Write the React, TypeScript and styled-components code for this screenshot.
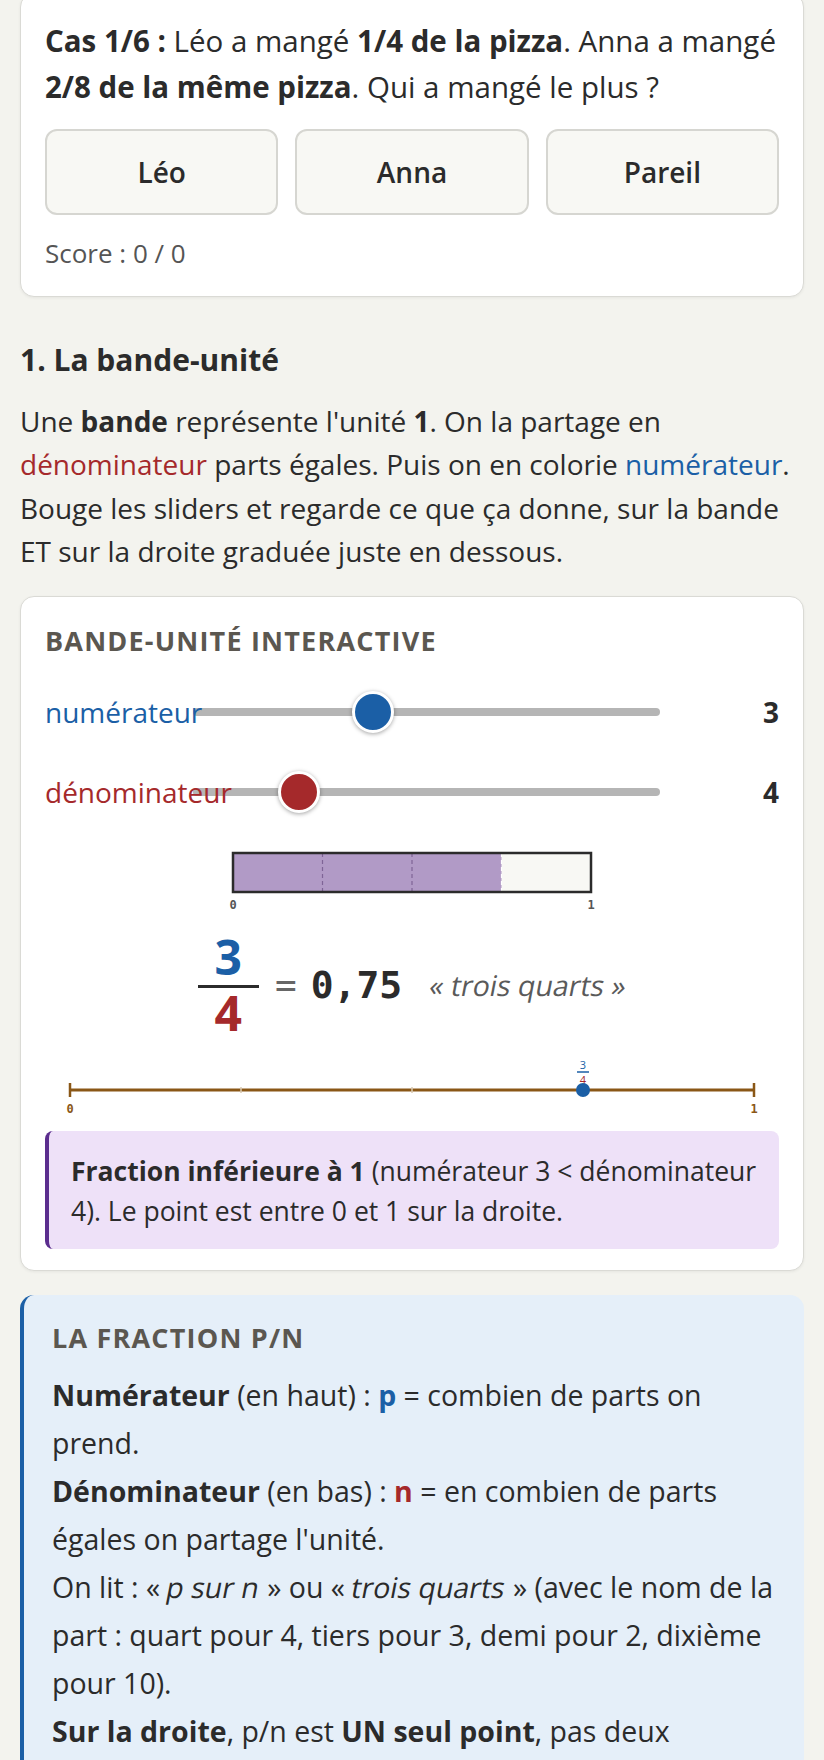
import { useState } from 'react'
import styled, { createGlobalStyle } from 'styled-components'

const BLUE = '#1b5fa6'
const RED = '#a5292b'
const INK = '#2b2b2b'
const BROWN = '#8a5716'
const MONO = "'DejaVu Sans Mono', 'Liberation Mono', monospace"

const GlobalStyle = createGlobalStyle`
  body {
    margin: 0;
    background: #f3f3ee;
    color: ${INK};
    font-family: 'Open Sans', 'Noto Sans', sans-serif;
  }
`

// the view is scrolled a little: the quiz card starts above the fold
const Page = styled.main`
  margin-top: -7px;
  padding: 0 20px 40px;
`

const Card = styled.section`
  background: #fff;
  border: 1px solid #dadad5;
  border-radius: 14px;
  padding: 24px 24px 21px;
  box-shadow: 0 1px 3px rgba(0, 0, 0, 0.06);
`

const Question = styled.p`
  margin: 0 0 19px;
  font-size: 29.5px;
  line-height: 46px;
`

const Choices = styled.div`
  display: grid;
  grid-template-columns: repeat(3, 1fr);
  gap: 17px;
`

const ChoiceButton = styled.button`
  height: 86px;
  border: 2px solid #d6d6d1;
  border-radius: 12px;
  background: #f8f8f4;
  color: ${INK};
  font-family: inherit;
  font-size: 28px;
  font-weight: 600;
  cursor: pointer;
`

const Score = styled.div`
  margin-top: 18px;
  font-size: 26px;
  line-height: 41.6px;
  color: #555;
`

const SectionTitle = styled.h2`
  margin: 43px 0 21px;
  font-size: 30px;
  line-height: 39px;
  font-weight: 700;
`

const Lead = styled.p`
  margin: 0 0 22px;
  font-size: 28px;
  line-height: 43.5px;
`

const Tint = styled.span<{ $color: string }>`
  color: ${(p) => p.$color};
`

// slanted upright face, keeps the roman widths
const Slant = styled.em`
  display: inline-block;
  font-style: normal;
  transform: skewX(-11deg);
`

const BoxTitle = styled.h3`
  margin: 0 0 28px;
  font-size: 27px;
  line-height: 39px;
  font-weight: 700;
  letter-spacing: 1.2px;
  text-transform: uppercase;
  color: #5b5750;
`

const Sliders = styled.div`
  display: grid;
  row-gap: 32px;
`

const SliderRow = styled.label`
  display: grid;
  grid-template-columns: 148px 1fr 119px;
  align-items: center;
  height: 48px;
`

const SliderName = styled.span<{ $color: string }>`
  position: relative;
  z-index: 1;
  white-space: nowrap;
  font-size: 28px;
  color: ${(p) => p.$color};
`

const Range = styled.input<{ $color: string }>`
  appearance: none;
  -webkit-appearance: none;
  width: 100%;
  height: 48px;
  margin: 0;
  background: transparent;

  &::-webkit-slider-runnable-track {
    height: 8px;
    border-radius: 4px;
    background: #b5b5b5;
  }

  &::-webkit-slider-thumb {
    -webkit-appearance: none;
    width: 42px;
    height: 42px;
    margin-top: -17px;
    border-radius: 50%;
    border: 3px solid #fff;
    background: ${(p) => p.$color};
    box-shadow: 0 1px 4px rgba(0, 0, 0, 0.35);
  }
`

const SliderValue = styled.span`
  text-align: right;
  font-size: 28px;
  font-weight: 700;
`

const BandSvg = styled.svg`
  display: block;
  margin: 33px auto 0;
`

const FractionRow = styled.div`
  display: flex;
  justify-content: center;
  align-items: center;
  margin-top: 20px;
`

const Fraction = styled.div`
  display: flex;
  flex-direction: column;
  align-items: stretch;
  padding: 0 17px;
  font-size: 48px;
  font-weight: 700;
  line-height: 48px;
  text-align: center;
`

const FractionBar = styled.div`
  height: 3.5px;
  margin: 4px -17px 1px;
  background: ${INK};
`

const Equals = styled.span`
  margin-left: 16px;
  font-family: ${MONO};
  font-size: 36px;
  color: #666;
`

const Decimal = styled.span`
  margin-left: 14px;
  font-family: ${MONO};
  font-size: 38px;
  font-weight: 700;
`

const Words = styled(Slant)`
  margin-left: 28px;
  font-size: 28.5px;
  color: #5a5a5a;
`

const LineSvg = styled.svg`
  display: block;
  margin-top: 16px;
`

const Note = styled.div`
  margin-top: 12px;
  padding: 20px 14px 18px 22px;
  border-left: 4px solid #5b2d8e;
  border-radius: 8px;
  background: #eee1f8;
  font-size: 26.5px;
  line-height: 40px;
`

const Rule = styled.aside`
  margin-top: 24px;
  padding: 24px 24px 24px 28px;
  border-left: 4px solid ${BLUE};
  border-radius: 14px;
  background: #e5eff9;
`

const RuleTitle = styled(BoxTitle)`
  margin: 0 0 14px;
  line-height: 38px;
`

const RuleLine = styled.p`
  margin: 0;
  font-size: 28.5px;
  line-height: 48px;
`

const COUNT = ['zéro', 'un', 'deux', 'trois', 'quatre', 'cinq', 'six', 'sept', 'huit', 'neuf', 'dix', 'onze', 'douze']
const PART: Record<number, string> = {
  2: 'demi', 3: 'tiers', 4: 'quart', 5: 'cinquième', 6: 'sixième', 7: 'septième',
  8: 'huitième', 9: 'neuvième', 10: 'dixième', 11: 'onzième', 12: 'douzième',
}

function readAloud(p: number, n: number): string {
  const part = PART[n]
  const plural = p > 1 && !part.endsWith('s') ? part + 's' : part
  return `${COUNT[p]} ${plural}`
}

function UnitBand({ num, den }: { num: number; den: number }) {
  const x0 = 11
  const y0 = 4
  const w = 358
  const h = 39
  const step = w / den
  return (
    <BandSvg width={380} height={64} viewBox="0 0 380 64">
      <rect x={x0} y={y0} width={w} height={h} fill="#f8f8f4" />
      <rect x={x0} y={y0} width={step * Math.min(num, den)} height={h} fill="#b19ac6" />
      {Array.from({ length: den - 1 }, (_, i) => {
        const k = i + 1
        const stroke = k < num ? '#7f6497' : k === num ? '#ffffff' : '#cfcfca'
        return (
          <line key={k} x1={x0 + k * step} x2={x0 + k * step} y1={y0} y2={y0 + h}
            stroke={stroke} strokeWidth={1.2} strokeDasharray="4 3" />
        )
      })}
      <rect x={x0} y={y0} width={w} height={h} fill="none" stroke={INK} strokeWidth={2.5} />
      <text x={x0} y={60} textAnchor="middle" fontFamily={MONO} fontSize={12} fontWeight={700} fill="#555">0</text>
      <text x={x0 + w} y={60} textAnchor="middle" fontFamily={MONO} fontSize={12} fontWeight={700} fill="#555">1</text>
    </BandSvg>
  )
}

function NumberLine({ num, den }: { num: number; den: number }) {
  const a = 25
  const b = 709
  const y = 37
  const span = b - a
  const px = a + span * Math.min(num / den, 1)
  return (
    <LineSvg width={734} height={66} viewBox="0 0 734 66">
      <line x1={a} x2={b} y1={y} y2={y} stroke={BROWN} strokeWidth={3} />
      {Array.from({ length: den - 1 }, (_, i) => (
        <line key={i} x1={a + ((i + 1) * span) / den} x2={a + ((i + 1) * span) / den}
          y1={y - 3} y2={y + 3} stroke="#d9c9b1" strokeWidth={1.5} />
      ))}
      <line x1={a} x2={a} y1={y - 7} y2={y + 7} stroke={BROWN} strokeWidth={2.5} />
      <line x1={b} x2={b} y1={y - 7} y2={y + 7} stroke={BROWN} strokeWidth={2.5} />
      <text x={px} y={16} textAnchor="middle" fontSize={11} fill={BLUE}>{num}</text>
      <line x1={px - 6} x2={px + 6} y1={19} y2={19} stroke={BLUE} strokeWidth={1.5} />
      <text x={px} y={31} textAnchor="middle" fontSize={11} fill={RED}>{den}</text>
      <circle cx={px} cy={y} r={7} fill={BLUE} />
      <text x={a} y={60} textAnchor="middle" fontFamily={MONO} fontSize={12} fontWeight={700} fill={BROWN}>0</text>
      <text x={b} y={60} textAnchor="middle" fontFamily={MONO} fontSize={12} fontWeight={700} fill={BROWN}>1</text>
    </LineSvg>
  )
}

function Comparison({ num, den }: { num: number; den: number }) {
  if (num < den) {
    return (
      <Note>
        <strong>Fraction inférieure à 1</strong> (numérateur {num} &lt; dénominateur {den}). Le point est
        entre 0 et 1 sur la droite.
      </Note>
    )
  }
  if (num === den) {
    return (
      <Note>
        <strong>Fraction égale à 1</strong> (numérateur {num} = dénominateur {den}). Le point est
        exactement sur 1.
      </Note>
    )
  }
  return (
    <Note>
      <strong>Fraction supérieure à 1</strong> (numérateur {num} &gt; dénominateur {den}). Le point est
      après 1 sur la droite.
    </Note>
  )
}

export default function App() {
  const [num, setNum] = useState(3)
  const [den, setDen] = useState(4)
  const decimal = (num / den).toFixed(2).replace(/\.?0+$/, '').replace('.', ',')

  return (
    <>
      <GlobalStyle />
      <Page>
        <Card>
          <Question>
            <strong>Cas 1/6 :</strong> Léo a mangé <strong>1/4 de la pizza</strong>. Anna a mangé{' '}
            <strong>2/8 de la même pizza</strong>. Qui a mangé le plus ?
          </Question>
          <Choices>
            <ChoiceButton>Léo</ChoiceButton>
            <ChoiceButton>Anna</ChoiceButton>
            <ChoiceButton>Pareil</ChoiceButton>
          </Choices>
          <Score>Score : 0 / 0</Score>
        </Card>

        <SectionTitle>1. La bande-unité</SectionTitle>
        <Lead>
          Une <strong>bande</strong> représente l'unité <strong>1</strong>. On la partage en{' '}
          <Tint $color={RED}>dénominateur</Tint> parts égales. Puis on en colorie{' '}
          <Tint $color={BLUE}>numérateur</Tint>. Bouge les sliders et regarde ce que ça donne, sur la
          bande ET sur la droite graduée juste en dessous.
        </Lead>

        <Card>
          <BoxTitle>Bande-unité interactive</BoxTitle>
          <Sliders>
            <SliderRow>
              <SliderName $color={BLUE}>numérateur</SliderName>
              <Range type="range" min={0} max={8} value={num} $color={BLUE}
                onChange={(e) => setNum(Number(e.target.value))} />
              <SliderValue>{num}</SliderValue>
            </SliderRow>
            <SliderRow>
              <SliderName $color={RED}>dénominateur</SliderName>
              <Range type="range" min={2} max={12} value={den} $color={RED}
                onChange={(e) => setDen(Number(e.target.value))} />
              <SliderValue>{den}</SliderValue>
            </SliderRow>
          </Sliders>

          <UnitBand num={num} den={den} />

          <FractionRow>
            <Fraction>
              <Tint $color={BLUE}>{num}</Tint>
              <FractionBar />
              <Tint $color={RED}>{den}</Tint>
            </Fraction>
            <Equals>=</Equals>
            <Decimal>{decimal}</Decimal>
            <Words>« {readAloud(num, den)} »</Words>
          </FractionRow>

          <NumberLine num={num} den={den} />
          <Comparison num={num} den={den} />
        </Card>

        <Rule>
          <RuleTitle>La fraction p/n</RuleTitle>
          <RuleLine>
            <strong>Numérateur</strong> (en haut) : <Tint $color={BLUE}><strong>p</strong></Tint> = combien
            de parts on prend.
          </RuleLine>
          <RuleLine>
            <strong>Dénominateur</strong> (en bas) : <Tint $color={RED}><strong>n</strong></Tint> = en
            combien de parts égales on partage l'unité.
          </RuleLine>
          <RuleLine>
            On lit : « <Slant>p sur n</Slant> » ou « <Slant>trois quarts</Slant> » (avec le nom de la
            part : quart pour 4, tiers pour 3, demi pour 2, dixième pour 10).
          </RuleLine>
          <RuleLine>
            <strong>Sur la droite</strong>, p/n est <strong>UN seul point</strong>, pas deux nombres
            séparés.
          </RuleLine>
        </Rule>
      </Page>
    </>
  )
}
